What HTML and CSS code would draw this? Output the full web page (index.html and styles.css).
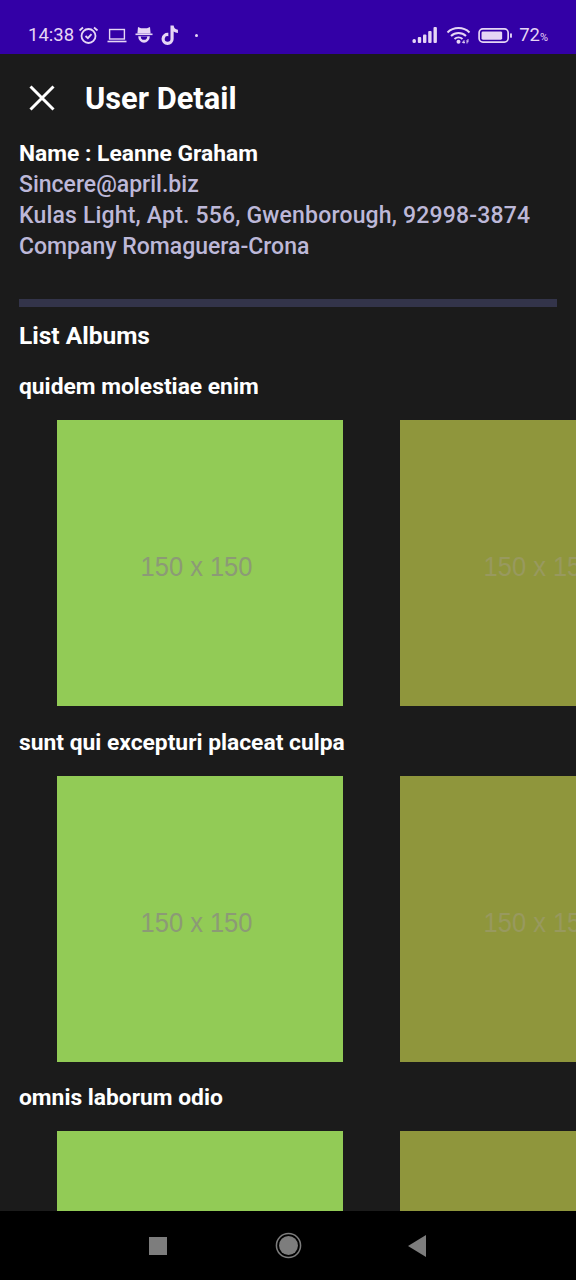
FILE: index.html
```html
<!DOCTYPE html>
<html>
<head>
    <link rel="stylesheet" href="styles.css">
</head>
<body>
    <div class="phone">
        <div class="status-bar">
            <div class="status-left">
                <span class="clock">14:38</span>
                <svg class="icon" width="21" height="20" viewBox="0 0 21 20"><circle cx="10.5" cy="11" r="7" fill="none" stroke="#e6d6f5" stroke-width="1.8"/><path d="M7.5 11l2.4 2.2 3.6-4M1.5 5.5l3.5-3M19.5 5.5l-3.5-3" fill="none" stroke="#e6d6f5" stroke-width="1.8"/></svg>
                <svg class="icon" width="20" height="15" viewBox="0 0 20 14"><rect x="2.6" y="1" width="14.8" height="9.5" fill="none" stroke="#e6d6f5" stroke-width="1.4"/><rect x="0.5" y="12.2" width="19" height="1.6" fill="#e6d6f5"/></svg>
                <svg class="icon" width="18" height="20" viewBox="0 0 18 18"><path d="M3 1l3 1.2h6L15 1l.6 6.5H2.4z" fill="#e6d6f5"/><rect x="0.5" y="7.5" width="17" height="1.6" fill="#e6d6f5"/><path d="M3.2 10.2h11.6a5.8 6.6 0 0 1-11.6 0z" fill="#e6d6f5"/><path d="M5.8 10.4h6.4a3.2 3.4 0 0 1-6.4 0z" fill="#3300a6"/></svg>
                <svg class="icon" width="18" height="20" viewBox="1 0.5 15.5 18.8"><path d="M9.2 1h3c.2 2.4 1.6 3.8 4 4v3c-1.5 0-2.9-.5-4-1.3v6.8a5.7 5.7 0 1 1-5-5.6v3.1a2.7 2.7 0 1 0 2 2.5z" fill="#e6d6f5"/></svg>
                <span class="dot"></span>
            </div>
            <div class="status-right">
                <svg class="icon" width="26" height="16" viewBox="0 0 26 16"><rect x="0.5" y="12" width="3.4" height="4" rx="1.5" fill="#e6d6f5"/><rect x="5.8" y="10" width="3.4" height="6" rx="1" fill="#e6d6f5"/><rect x="11" y="7.5" width="3.4" height="8.5" rx="1" fill="#e6d6f5"/><rect x="16.2" y="4" width="3.4" height="12" rx="1" fill="#e6d6f5"/><rect x="21.5" y="0" width="3.4" height="16" rx="1" fill="#e6d6f5"/></svg>
                <svg class="icon wifi" width="26" height="18" viewBox="0 0 26 18"><path d="M1.5 6.5a16 16 0 0 1 22 0M5 10a11 11 0 0 1 15 0M8.5 13a6 6 0 0 1 8 0" fill="none" stroke="#e6d6f5" stroke-width="2"/><circle cx="12.5" cy="15.8" r="2" fill="#e6d6f5"/><path d="M18 17.5v-3l-1.6 2h2.6M21 14v3.5M21 14h2M21 15.7h1.6" fill="none" stroke="#e6d6f5" stroke-width="0.9"/></svg>
                <svg class="icon" width="37" height="15" viewBox="0 0 37 16"><rect x="1" y="1" width="31" height="14" rx="4" fill="none" stroke="#e6d6f5" stroke-width="1.8"/><rect x="3.6" y="3.6" width="22" height="8.8" rx="1.5" fill="#e6d6f5"/><rect x="34" y="5.5" width="2" height="5" rx="1" fill="#e6d6f5"/></svg>
                <span class="battery">72<small>%</small></span>
            </div>
        </div>

        <div class="content">
            <div class="app-bar">
                <svg width="28" height="28" viewBox="0 0 28 28"><path d="M2.5 2.5l23 23M25.5 2.5l-23 23" fill="none" stroke="#ffffff" stroke-width="3"/></svg>
                <h1>User Detail</h1>
            </div>

            <div class="user-info">
                <p class="user-name">Name : Leanne Graham</p>
                <p>Sincere@april.biz</p>
                <p class="address">Kulas Light, Apt. 556, Gwenborough, 92998-3874</p>
                <p>Company Romaguera-Crona</p>
            </div>

            <hr class="divider">

            <h2>List Albums</h2>

            <section class="album">
                <h3>quidem molestiae enim</h3>
                <div class="photo-row">
                    <div class="photo green"><span>150 x 150</span></div>
                    <div class="photo olive"><span>150 x 150</span></div>
                </div>
            </section>

            <section class="album">
                <h3>sunt qui excepturi placeat culpa</h3>
                <div class="photo-row">
                    <div class="photo green"><span>150 x 150</span></div>
                    <div class="photo olive"><span>150 x 150</span></div>
                </div>
            </section>

            <section class="album">
                <h3>omnis laborum odio</h3>
                <div class="photo-row">
                    <div class="photo green"></div>
                    <div class="photo olive"></div>
                </div>
            </section>
        </div>

        <div class="nav-bar">
            <svg width="18" height="18" viewBox="0 0 18 18"><rect width="18" height="18" fill="#7d7d7d"/></svg>
            <svg width="27" height="27" viewBox="0 0 28 28"><circle cx="14" cy="14" r="12.5" fill="none" stroke="#7d7d7d" stroke-width="1.6"/><circle cx="14" cy="14" r="9.8" fill="#7d7d7d"/></svg>
            <svg class="nav-back" width="18" height="22" viewBox="0 0 18 22"><path d="M18 0v22L0 11z" fill="#7d7d7d"/></svg>
        </div>
    </div>
</body>
</html>
```

FILE: styles.css
```css
* {
    box-sizing: border-box;
}

body {
    margin: 0;
    background-color: #1b1b1b;
    font-family: Roboto, "Liberation Sans", sans-serif;
}

.phone {
    width: 576px;
    height: 1280px;
    display: flex;
    flex-direction: column;
    overflow: hidden;
}

/* status bar */
.status-bar {
    height: 54px;
    flex-shrink: 0;
    background-color: #3300a6;
    color: #e6d6f5;
    display: flex;
    justify-content: space-between;
    padding: 16px 28px 0 28px;
}

.status-left,
.status-right {
    display: flex;
    align-items: center;
    height: 38px;
}

.status-left {
    gap: 8px;
}

.status-right {
    gap: 5px;
}

.clock {
    font-size: 18.5px;
    margin-right: -4px;
}

.dot {
    width: 3px;
    height: 3px;
    border-radius: 50%;
    background-color: #e6d6f5;
    margin-left: 8px;
}

.wifi {
    margin-left: 3px;
}

.battery {
    font-size: 18.5px;
}

.battery small {
    font-size: 11px;
}

/* main area */
.content {
    flex: 1;
    min-height: 0;
    overflow: hidden;
    padding: 0 19px;
}

.app-bar {
    height: 84px;
    padding-top: 4px;
    display: flex;
    align-items: center;
    gap: 29px;
    padding-left: 9px;
}

.app-bar h1 {
    margin: 0;
    color: #ffffff;
    font-size: 30.8px;
    font-weight: 700;
}

.user-info p {
    margin: 0;
    color: #bdb8d8;
    font-size: 23px;
    font-weight: 500;
    line-height: 31px;
}

.user-info .user-name {
    color: #ffffff;
    font-size: 22.8px;
    font-weight: 700;
}

.user-info .address {
    letter-spacing: 0.18px;
}

.divider {
    height: 8px;
    margin: 37px 0 0 0;
    border: none;
    background-color: #33344a;
}

h2 {
    margin: 11px 0 0 0;
    color: #ffffff;
    font-size: 24.5px;
    font-weight: 700;
    line-height: 36px;
}

.album h3 {
    margin: 0;
    color: #ffffff;
    font-size: 22.8px;
    font-weight: 700;
    line-height: 30px;
}

.album {
    margin-top: 18px;
}

.album + .album {
    margin-top: 21.5px;
}

.photo-row {
    display: flex;
    gap: 57px;
    margin: 18px -19px 0 38px;
}

.photo {
    width: 286px;
    height: 286px;
    flex-shrink: 0;
    display: flex;
    justify-content: center;
    padding-top: 131px;
    padding-right: 7px;
    font-family: "Liberation Sans", Arial, sans-serif;
    font-size: 28px;
    white-space: nowrap;
}

.photo span {
    transform: scaleX(0.91);
}

.green {
    background-color: #92cb56;
    color: #8c9a76;
}

.olive {
    background-color: #8f963c;
    color: #98995f;
}

/* nav bar */
.nav-bar {
    height: 69px;
    flex-shrink: 0;
    background-color: #000000;
    display: flex;
    align-items: center;
    justify-content: center;
    gap: 108px;
    padding-right: 2px;
}

.nav-back {
    margin-left: -2px;
}
```
